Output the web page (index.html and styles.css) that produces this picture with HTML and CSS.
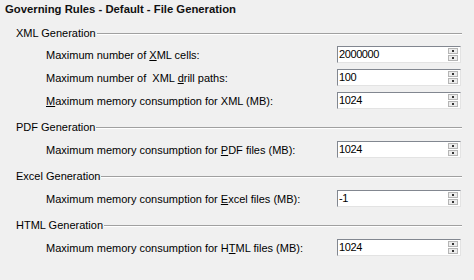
FILE: index.html
```html
<!DOCTYPE html>
<html>
<head>
<meta charset="utf-8">
<link rel="stylesheet" href="styles.css">
</head>
<body>
<div class="page">
  <div class="title">Governing Rules - Default - File Generation</div>

  <div class="section">
    <div class="legend first"><span class="legend-text">XML Generation</span><span class="rule"></span></div>
    <div class="row">
      <span class="label">Maximum number of <u>X</u>ML cells:</span>
      <div class="spin"><span class="val">2000000</span><span class="btns"><span class="btn up"></span><span class="btn down"></span></span></div>
    </div>
    <div class="row">
      <span class="label">Maximum number of &nbsp;XML <u>d</u>rill paths:</span>
      <div class="spin"><span class="val">100</span><span class="btns"><span class="btn up"></span><span class="btn down"></span></span></div>
    </div>
    <div class="row">
      <span class="label"><u>M</u>aximum memory consumption for XML (MB):</span>
      <div class="spin"><span class="val">1024</span><span class="btns"><span class="btn up"></span><span class="btn down"></span></span></div>
    </div>
  </div>

  <div class="section">
    <div class="legend"><span class="legend-text">PDF Generation</span><span class="rule"></span></div>
    <div class="row">
      <span class="label">Maximum memory consumption for <u>P</u>DF files (MB):</span>
      <div class="spin"><span class="val">1024</span><span class="btns"><span class="btn up"></span><span class="btn down"></span></span></div>
    </div>
  </div>

  <div class="section">
    <div class="legend"><span class="legend-text">Excel Generation</span><span class="rule"></span></div>
    <div class="row">
      <span class="label">Maximum memory consumption for <u>E</u>xcel files (MB):</span>
      <div class="spin"><span class="val">-1</span><span class="btns"><span class="btn up"></span><span class="btn down"></span></span></div>
    </div>
  </div>

  <div class="section">
    <div class="legend"><span class="legend-text">HTML Generation</span><span class="rule"></span></div>
    <div class="row">
      <span class="label">Maximum memory consumption for H<u>T</u>ML files (MB):</span>
      <div class="spin"><span class="val">1024</span><span class="btns"><span class="btn up"></span><span class="btn down"></span></span></div>
    </div>
  </div>
</div>
</body>
</html>
```

FILE: styles.css
```css
html, body {
  margin: 0;
  padding: 0;
}
body {
  background: #f0f0f0;
  font-family: "Liberation Sans", Arial, sans-serif;
  font-size: 11px;
  color: #000;
  width: 474px;
  height: 280px;
  overflow: hidden;
}
.page {
  display: flex;
  flex-direction: column;
}
.title {
  height: 17px;
  line-height: 18px;
  padding-left: 5px;
  font-weight: bold;
  font-size: 11.3px;
  color: #111;
}
.section {
  display: flex;
  flex-direction: column;
}
.legend {
  height: 26px;
  display: flex;
  align-items: flex-start;
  padding-left: 16px;
  padding-right: 12px;
  padding-top: 8px;
  box-sizing: border-box;
}
.legend.first {
  padding-top: 9px;
}
.legend-text {
  line-height: 14px;
}
.rule {
  flex: 1;
  height: 0;
  border-top: 1px solid #a0a0a0;
  border-bottom: 1px solid #ffffff;
  margin-left: 1px;
  margin-top: 7px;
}
.row {
  height: 23px;
  display: flex;
  align-items: center;
  padding-left: 46px;
  padding-right: 13px;
}
.label {
  flex: 1;
  white-space: pre;
}
.spin {
  width: 124px;
  height: 17px;
  box-sizing: border-box;
  background: #fff;
  border-top: 1px solid #828790;
  border-left: 1px solid #828790;
  border-right: 1px solid #e3e3e3;
  border-bottom: 1px solid #e3e3e3;
  display: flex;
  align-items: center;
}
.val {
  flex: 1;
  padding-left: 1px;
  line-height: 15px;
  font-size: 11px;
  letter-spacing: -0.4px;
}
.btns {
  display: flex;
  flex-direction: column;
  gap: 1px;
  margin-right: 2px;
}
.btn {
  width: 10px;
  height: 6px;
  box-sizing: border-box;
  background: #ececec;
  border: 1px solid #b5b5b5;
  position: relative;
}
.btn::after {
  content: "";
  position: absolute;
  left: 3px;
  width: 2px;
  height: 2px;
  background: #333;
}
.up::after { top: 1px; }
.down::after { top: 1px; }
```
